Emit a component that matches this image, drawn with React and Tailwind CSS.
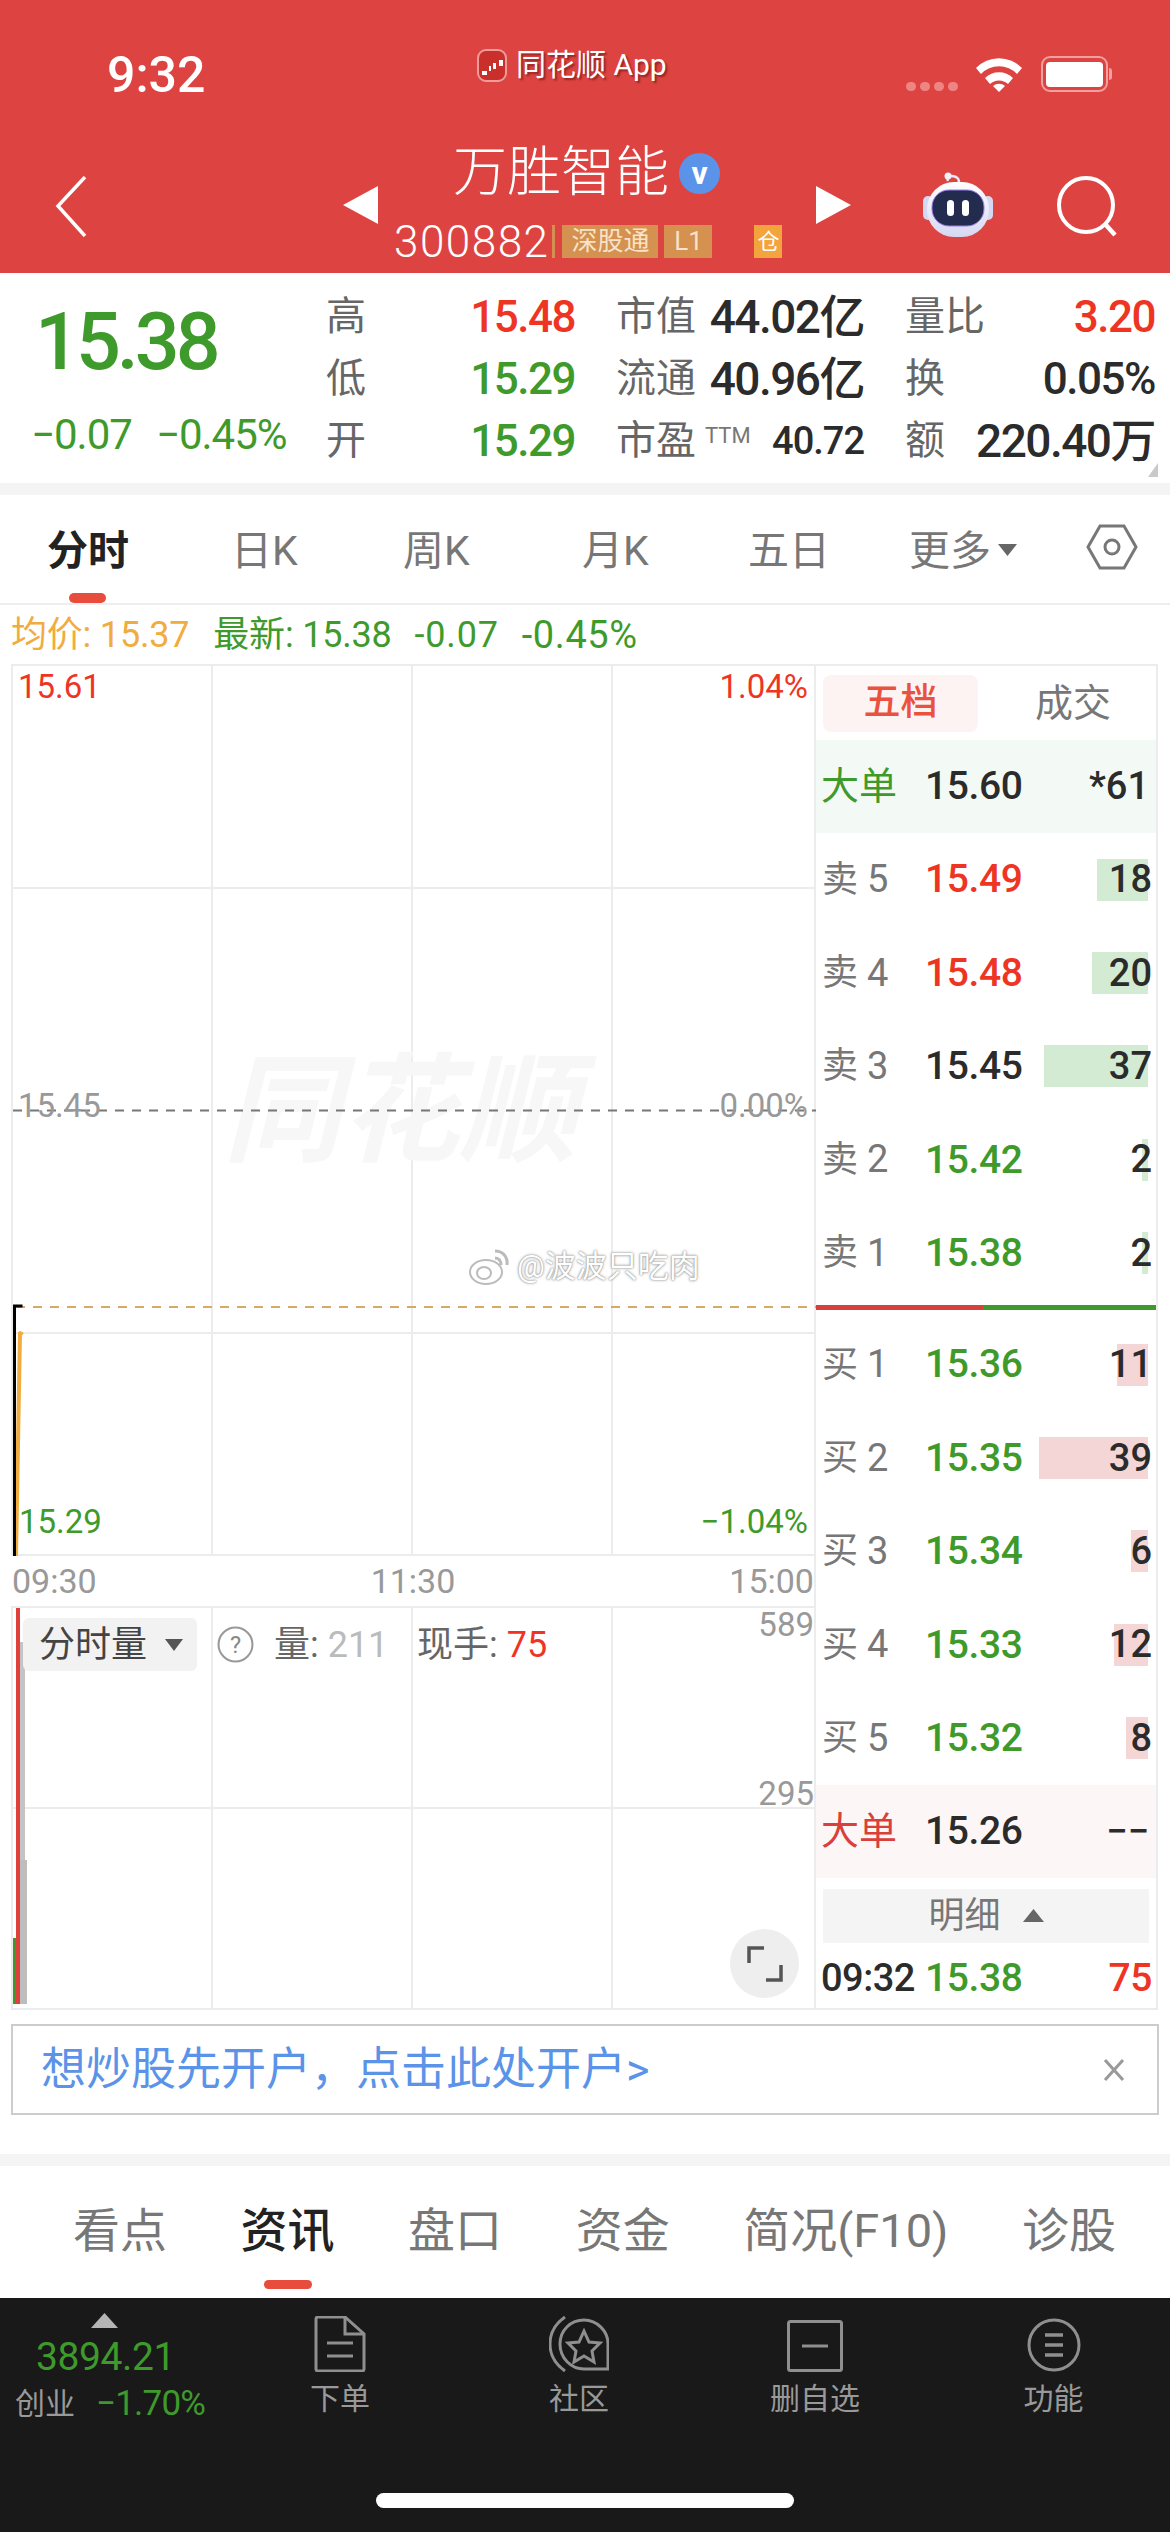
const GREEN = "text-[#3f9a2c]";
const RED = "text-[#ee3524]";
const DARK = "text-[#2b2b2b]";

const SELLS = [
  { label: "卖", n: 5, price: "15.49", color: RED, qty: "18", bar: 51 },
  { label: "卖", n: 4, price: "15.48", color: RED, qty: "20", bar: 56 },
  { label: "卖", n: 3, price: "15.45", color: DARK, qty: "37", bar: 104 },
  { label: "卖", n: 2, price: "15.42", color: GREEN, qty: "2", bar: 6 },
  { label: "卖", n: 1, price: "15.38", color: GREEN, qty: "2", bar: 6 },
];

const BUYS = [
  { label: "买", n: 1, price: "15.36", qty: "11", bar: 31 },
  { label: "买", n: 2, price: "15.35", qty: "39", bar: 109 },
  { label: "买", n: 3, price: "15.34", qty: "6", bar: 17 },
  { label: "买", n: 4, price: "15.33", qty: "12", bar: 34 },
  { label: "买", n: 5, price: "15.32", qty: "8", bar: 22 },
];

const CHART_TABS = [
  { label: "分时", left: "w-[231px]", active: true },
  { label: "日K", left: "w-[172px]" },
  { label: "周K", left: "w-[179px]" },
  { label: "月K", left: "w-[166px]" },
  { label: "五日", left: "w-[161px]" },
];

const NEWS_TABS = ["看点", "资讯", "盘口", "资金", "简况(F10)", "诊股"];

function BookRow({ row, barColor }) {
  return (
    <div className="flex h-[93.4px] items-center pl-[6px] pr-[4px]">
      <span className="flex w-[103px] items-center text-[36px] text-[#777]">
        {row.label}
        <span className="ml-[9px] text-[38px]">{row.n}</span>
      </span>
      <span className={`w-[93px] text-[39px] font-medium tracking-[-0.4px] ${row.color || GREEN}`}>{row.price}</span>
      <span className="relative flex flex-1 items-center justify-end text-[38px] font-medium text-[#2b2b2b]">
        <span
          className={`absolute right-[4px] h-[42px] ${barColor}`}
          style={{ width: row.bar }}
        />
        <span className="relative">{row.qty}</span>
      </span>
    </div>
  );
}

function BigOrderRow({ label, labelColor, bg, price, qty }) {
  return (
    <div className={`flex h-[93px] items-center pl-[5px] pr-[4px] ${bg}`}>
      <span className={`w-[104px] text-[38px] ${labelColor}`}>{label}</span>
      <span className="w-[93px] text-[39px] font-medium tracking-[-0.4px] text-[#2b2b2b]">{price}</span>
      <span className="flex-1 pr-[3px] text-right text-[38px] font-medium text-[#2b2b2b]">{qty}</span>
    </div>
  );
}

function StatCell({ label, value, color, big }) {
  return (
    <div className="flex items-center justify-between">
      <span className="text-[40px] text-[#666]">{label}</span>
      <span className={`font-medium tracking-[-1.5px] ${big ? "text-[46px]" : "text-[44px]"} ${color}`}>{value}</span>
    </div>
  );
}

function StatusBar() {
  return (
    <div className="flex h-[112px] items-start">
      <span className="ml-[107px] mt-[50px] w-[100px] text-[50px] font-medium leading-[50px] text-white">9:32</span>
      <div className="ml-[270px] mt-[48px] flex items-center gap-[9px]">
        <svg width="30" height="33" viewBox="0 0 30 33">
          <rect x="1" y="1" width="28" height="31" rx="8" fill="#c9302c" stroke="#ee9c99" strokeWidth="2" />
          <path d="M5 22h5v4H5zM12 17h2v5h-2zM16 14h3v6h-3zM22 11h4v6h-4z" fill="#fff" />
        </svg>
        <span className="text-[30px] leading-[34px] text-white [text-shadow:2px_2px_2px_rgba(90,10,10,0.55)]">同花顺 App</span>
      </div>
      <div className="ml-[239px] mt-[82px] flex gap-[4px]">
        {[0, 1, 2, 3].map((i) => (
          <span key={i} className="h-[9px] w-[10px] rounded-full bg-[#ee8583]" />
        ))}
      </div>
      <svg className="ml-[16px] mt-[55px]" width="50" height="37" viewBox="0 0 50 37">
        <path d="M2 13a32 32 0 0 1 46 0l-5 6a25 25 0 0 0-36 0z" fill="#fff" />
        <path d="M11 23a20 20 0 0 1 28 0l-5 6a13 13 0 0 0-18 0z" fill="#fff" />
        <path d="M19 31a9 9 0 0 1 12 0l-6 6z" fill="#fff" />
      </svg>
      <div className="relative ml-[17px] mt-[56px] flex h-[36px] w-[67px] items-center rounded-[9px] border-[2px] border-[#f0a09e] px-[3px]">
        <span className="h-[25px] w-[57px] rounded-[4px] bg-white" />
        <span className="absolute -right-[6px] h-[12px] w-[3px] rounded-r bg-[#f0a09e]" />
      </div>
    </div>
  );
}

function Robot() {
  return (
    <svg width="72" height="68" viewBox="0 0 72 68">
      <defs>
        <linearGradient id="shell" x1="0" y1="0" x2="0" y2="1">
          <stop offset="0" stopColor="#ffffff" />
          <stop offset="1" stopColor="#d5d8f2" />
        </linearGradient>
      </defs>
      <path d="M26 12c-2-5 3-6 8-4 2 1 3 3 3 5" fill="none" stroke="#e6e8f5" strokeWidth="2.5" />
      <circle cx="26" cy="7" r="3.5" fill="#eef0fa" />
      <rect x="1" y="27" width="10" height="24" rx="5" fill="#d5d8f2" />
      <rect x="61" y="27" width="10" height="24" rx="5" fill="#d5d8f2" />
      <rect x="5" y="13" width="62" height="55" rx="27" fill="url(#shell)" />
      <rect x="10" y="21" width="52" height="36" rx="17" fill="#232c4f" stroke="#9a7de8" strokeWidth="1" />
      <rect x="25" y="31" width="7" height="16" rx="3.5" fill="#fff" />
      <rect x="40" y="31" width="7" height="16" rx="3.5" fill="#fff" />
    </svg>
  );
}

function TitleBar() {
  return (
    <div className="flex h-[161px] items-start">
      <svg className="ml-[55px] mt-[64px]" width="32" height="61" viewBox="0 0 32 61">
        <path d="M30 1 3 30l27 30" fill="none" stroke="#fff" strokeWidth="3.5" />
      </svg>
      <svg className="ml-[256px] mt-[74px]" width="35" height="38" viewBox="0 0 35 38">
        <path d="M35 0v38L0 19z" fill="#fff" />
      </svg>
      <div className="ml-[16px] w-[404px] pt-[17px]">
        <div className="flex h-[88px] items-center pl-[59px]">
          <span className="text-[54px] font-light leading-[60px] text-white">万胜智能</span>
          <span className="ml-[10px] flex h-[41px] w-[41px] items-center justify-center rounded-full bg-[#5b93e8] text-[32px] font-bold leading-none text-white">v</span>
        </div>
        <div className="mt-[8px] flex h-[33px] items-center">
          <span className="text-[44px] font-light leading-none tracking-[1.5px] text-white">300882</span>
          <span className="ml-[3px] h-[33px] w-[3px] bg-[#d49050]" />
          <span className="ml-[7px] flex h-[33px] w-[96px] items-center justify-center bg-[#d4914f] text-[26px] text-[#f8e2c9]">深股通</span>
          <span className="ml-[6px] flex h-[33px] w-[48px] items-center justify-center bg-[#d4914f] text-[26px] text-[#f8e2c9]">L1</span>
          <span className="ml-[42px] flex h-[33px] w-[28px] items-center justify-center bg-[#f4a43c] text-[22px] text-white">仓</span>
        </div>
      </div>
      <svg className="ml-[18px] mt-[74px]" width="35" height="38" viewBox="0 0 35 38">
        <path d="M0 0v38L35 19z" fill="#fff" />
      </svg>
      <div className="ml-[71px] mt-[57px]">
        <Robot />
      </div>
      <svg className="ml-[63px] mt-[64px]" width="62" height="62" viewBox="0 0 62 62">
        <circle cx="29" cy="29" r="27" fill="none" stroke="#fff" strokeWidth="4" />
        <path d="M49 49l9 10" stroke="#fff" strokeWidth="4.5" />
      </svg>
    </div>
  );
}

function Stats() {
  return (
    <div className="relative flex h-[210px] bg-white">
      <div className="w-[326px] shrink-0">
        <div className="ml-[35px] mt-[26px] text-[79px] font-medium leading-[86px] tracking-[-4px] text-[#3f9a2c]">15.38</div>
        <div className="ml-[31px] mt-[28px] flex gap-[24px] text-[42px] leading-[44px] tracking-[-1px] text-[#3f9a2c]">
          <span>−0.07</span>
          <span>−0.45%</span>
        </div>
      </div>
      <div className="mt-[13px] grid h-[186px] w-[829px] grid-cols-[249px_248px_250px] grid-rows-3 gap-x-[41px]">
        <StatCell label="高" value="15.48" color={RED} />
        <StatCell label="市值" value="44.02亿" color={DARK} big />
        <StatCell label="量比" value="3.20" color={RED} />
        <StatCell label="低" value="15.29" color={GREEN} />
        <StatCell label="流通" value="40.96亿" color={DARK} big />
        <StatCell label="换" value="0.05%" color={DARK} />
        <StatCell label="开" value="15.29" color={GREEN} />
        <div className="flex items-center justify-between">
          <span className="flex items-start">
            <span className="text-[40px] text-[#666]">市盈</span>
            <span className="ml-[9px] mt-[8px] text-[22px] text-[#777]">TTM</span>
          </span>
          <span className="text-[38px] font-medium tracking-[-1px] text-[#2b2b2b]">40.72</span>
        </div>
        <StatCell label="额" value="220.40万" color={DARK} big />
      </div>
      <svg className="absolute bottom-[6px] right-[12px]" width="10" height="14" viewBox="0 0 10 14">
        <path d="M10 0v14H0z" fill="#c9c9c9" />
      </svg>
    </div>
  );
}

function ChartTabs() {
  return (
    <div className="flex h-[110px] items-start border-b-[2px] border-[#eeeeee] bg-white pt-[32px]">
      {CHART_TABS.map((t) => (
        <div key={t.label} className={`relative shrink-0 ${t.left} ${t.active ? "pl-[47px]" : ""}`}>
          <span className={`text-[41px] leading-[48px] ${t.active ? "font-semibold text-[#222]" : "text-[#777]"}`}>{t.label}</span>
          {t.active && <span className="absolute left-[69px] top-[66px] h-[10px] w-[37px] rounded-full bg-[#e84c3d]" />}
        </div>
      ))}
      <span className="w-[89px] shrink-0 text-[41px] leading-[48px] text-[#777]">更多</span>
      <svg className="mt-[17px] shrink-0" width="19" height="12" viewBox="0 0 19 12">
        <path d="M0 0h19l-9.500 12z" fill="#666" />
      </svg>
      <svg className="ml-[69px] -mt-[3px] shrink-0" width="52" height="46" viewBox="0 0 52 46">
        <path d="M14 2h24l12 21-12 21H14L2 23z" fill="none" stroke="#777" strokeWidth="3" />
        <circle cx="26" cy="23" r="7" fill="none" stroke="#777" strokeWidth="3" />
      </svg>
    </div>
  );
}

function InfoLine() {
  return (
    <div className="flex h-[59px] items-center bg-white pl-[11px] pt-[1px] text-[36px] tracking-[-0.2px]">
      <span className="text-[#f0ac3e]">均价: 15.37</span>
      <span className="ml-[24px] text-[#3f9a2c]">最新: 15.38</span>
      <span className="ml-[23px] tracking-[0.8px] text-[#3f9a2c]">-0.07</span>
      <span className="ml-[23px] text-[38px] tracking-[0.6px] text-[#3f9a2c]">-0.45%</span>
    </div>
  );
}

function GridCells({ rows, skipRow }) {
  const cells = [];
  for (let i = 0; i < rows * 4; i++) {
    const row = Math.floor(i / 4);
    cells.push(
      <div
        key={i}
        className={`${i % 4 === 3 ? "" : "border-r-[2px]"} ${row === skipRow ? "" : "border-b-[2px]"} border-[#ececec]`}
      />
    );
  }
  return cells;
}

function WeiboMark() {
  return (
    <div className="absolute left-[456px] top-[578px] flex items-center gap-[6px] text-[31px] text-white [text-shadow:0_0_3px_#888,0_0_1px_#888]">
      <svg width="42" height="38" viewBox="0 0 42 38">
        <ellipse cx="17" cy="24" rx="16" ry="12" fill="#fff" stroke="#bbb" strokeWidth="2" />
        <ellipse cx="15" cy="25" rx="7" ry="6" fill="none" stroke="#bbb" strokeWidth="2" />
        <path d="M26 3c8 0 13 6 12 14M26 10c4 0 6 3 6 7" fill="none" stroke="#bbb" strokeWidth="3" />
      </svg>
      <span>@波波只吃肉</span>
    </div>
  );
}

function MainChart() {
  return (
    <div className="relative grid h-[892px] grid-cols-[200px_200px_200px_203px] grid-rows-4 border-l-[2px] border-t-[2px] border-[#ececec] bg-white">
      <GridCells rows={4} skipRow={1} />
      <span className="absolute left-[210px] top-[381px] select-none text-[118px] font-bold italic leading-[130px] text-[#f7f7f7]">同花顺</span>
      <svg className="absolute left-0 top-0" width="803" height="892" viewBox="0 0 803 892">
        <path d="M0 444.500H803" stroke="#777" strokeWidth="2" strokeDasharray="9 8" />
        <path d="M3 641H803" stroke="#d8a868" strokeWidth="2" strokeDasharray="9 8" />
        <path d="M3 890 7 666" stroke="#f0ac3e" strokeWidth="4" fill="none" />
        <path d="M6 666l4 2" stroke="#f0ac3e" strokeWidth="3" />
        <path d="M1.500 890V640h8" stroke="#000" strokeWidth="3" fill="none" />
      </svg>
      <span className="absolute left-[5px] top-[1px] text-[33px] leading-[40px] text-[#ee3524]">15.61</span>
      <span className="absolute right-[6px] top-[1px] text-[33px] leading-[40px] text-[#ee3524]">1.04%</span>
      <span className="absolute left-[5px] top-[420px] text-[33px] leading-[40px] text-[#999]">15.45</span>
      <span className="absolute right-[6px] top-[420px] text-[33px] leading-[40px] text-[#999]">0.00%</span>
      <span className="absolute bottom-[14px] left-[6px] text-[33px] leading-[40px] text-[#3f9a2c]">15.29</span>
      <span className="absolute bottom-[14px] right-[6px] text-[33px] leading-[40px] text-[#3f9a2c]">−1.04%</span>
      <WeiboMark />
    </div>
  );
}

function VolumeChart() {
  return (
    <div className="relative grid h-[404px] grid-cols-[200px_200px_200px_203px] grid-rows-2 border-l-[2px] border-t-[2px] border-[#ececec] bg-white">
      <GridCells rows={2} />
      <svg className="absolute left-0 top-0" width="16" height="398" viewBox="0 0 16 398">
        <rect x="6" y="34" width="6" height="362" fill="#c4c4c4" />
        <rect x="6" y="252" width="8" height="144" fill="#bdbdbd" />
        <rect x="0" y="330" width="4" height="66" fill="#3f9a2c" />
        <rect x="3" y="0" width="4" height="396" fill="#e0403c" />
      </svg>
      <div className="absolute left-[10px] top-[10px] flex h-[53px] w-[174px] items-center rounded-[6px] bg-[#f2f2f2] pl-[16px] text-[36px] text-[#444]">
        分时量
        <svg className="ml-[18px]" width="18" height="12" viewBox="0 0 18 12">
          <path d="M0 0h18l-9 12z" fill="#555" />
        </svg>
      </div>
      <svg className="absolute left-[204px] top-[18px]" width="37" height="37" viewBox="0 0 36 36">
        <circle cx="18" cy="18" r="16.500" fill="none" stroke="#999" strokeWidth="2" />
        <text x="18" y="26" textAnchor="middle" fontSize="23" fill="#888" fontFamily="Roboto">?</text>
      </svg>
      <span className="absolute left-[261px] top-[15px] text-[36px] leading-[44px] text-[#666]">
        量: <span className="text-[#bbb]">211</span>
      </span>
      <span className="absolute left-[404px] top-[15px] text-[36px] leading-[44px] text-[#666]">
        现手: <span className="text-[#ee3524]">75</span>
      </span>
      <span className="absolute right-[0px] top-[-3px] text-[33px] leading-[40px] text-[#999]">589</span>
      <span className="absolute right-[0px] top-[166px] text-[33px] leading-[40px] text-[#999]">295</span>
      <div className="absolute left-[717px] top-[321px] flex h-[69px] w-[69px] items-center justify-center rounded-full bg-[#eeeeee]">
        <svg width="36" height="36" viewBox="0 0 36 36">
          <path d="M2 17V2h15M34 19v15H19" fill="none" stroke="#555" strokeWidth="3.500" />
        </svg>
      </div>
    </div>
  );
}

function OrderBook() {
  return (
    <div className="flex h-[1346px] w-[344px] flex-col border-x-[2px] border-y-[2px] border-[#ececec] bg-white">
      <div className="flex h-[74px] shrink-0 items-center pl-[7px]">
        <span className="flex h-[57px] w-[155px] items-center justify-center rounded-[8px] bg-[#fdf3f2] text-[37px] font-medium text-[#e8523f]">五档</span>
        <span className="ml-[20px] w-[150px] text-center text-[38px] text-[#777]">成交</span>
      </div>
      <BigOrderRow label="大单" labelColor="text-[#3f9a2c]" bg="bg-[#f3f9f5]" price="15.60" qty="*61" />
      {SELLS.map((r) => (
        <BookRow key={r.n} row={r} barColor="bg-[#d2ebd2]" />
      ))}
      <div className="mt-[5px] flex h-[5px] shrink-0">
        <span className="w-[167px] bg-[#d8403b]" />
        <span className="flex-1 bg-[#3f9a2c]" />
      </div>
      <div className="h-[8px] shrink-0" />
      {BUYS.map((r) => (
        <BookRow key={r.n} row={r} barColor="bg-[#f4d6d6]" />
      ))}
      <BigOrderRow label="大单" labelColor="text-[#d8403b]" bg="bg-[#fdf6f6]" price="15.26" qty="−−" />
      <div className="mx-[7px] mt-[11px] flex h-[54px] shrink-0 items-center justify-center gap-[22px] bg-[#f4f4f4] text-[36px] text-[#777]">
        明细
        <svg width="21" height="13" viewBox="0 0 21 13">
          <path d="M0 13 10.500 0 21 13z" fill="#666" />
        </svg>
      </div>
      <div className="flex flex-1 items-center pl-[5px] pr-[4px] pt-[6px] text-[39px] font-medium tracking-[-0.4px]">
        <span className="w-[104px] text-[38px] tracking-[-0.5px] text-[#2b2b2b]">09:32</span>
        <span className={`w-[93px] ${GREEN}`}>15.38</span>
        <span className={`flex-1 text-right ${RED}`}>75</span>
      </div>
    </div>
  );
}

function NavIcon({ children }) {
  return <div className="flex h-[58px] items-end justify-center">{children}</div>;
}

function BottomBar() {
  return (
    <div className="flex h-[234px] flex-col bg-[#191919]">
      <div className="flex h-[195px] items-start">
        <div className="w-[235px] shrink-0">
          <svg className="ml-[91px] mt-[15px]" width="27" height="15" viewBox="0 0 27 15">
            <path d="M0 15 13.500 0 27 15z" fill="#b5b5b5" />
          </svg>
          <div className="ml-[36px] mt-[7px] text-[39px] leading-[44px] tracking-[-0.4px] text-[#3f9a2c]">3894.21</div>
          <div className="ml-[15px] mt-[4px] flex items-center gap-[21px]">
            <span className="text-[30px] leading-[42px] text-[#999]">创业</span>
            <span className="text-[35px] leading-[42px] tracking-[-0.8px] text-[#3f9a2c]">−1.70%</span>
          </div>
        </div>
        <div className="mt-[16px] w-[210px] shrink-0 text-center">
          <NavIcon>
            <svg width="52" height="56" viewBox="0 0 52 56">
              <path d="M2 3a2 2 0 0 1 2-2h27l19 17v35a2 2 0 0 1-2 2H4a2 2 0 0 1-2-2z" fill="none" stroke="#8f8f8f" strokeWidth="3" />
              <path d="M31 1v17h19M13 27h26M13 40h26" fill="none" stroke="#8f8f8f" strokeWidth="3" />
            </svg>
          </NavIcon>
          <div className="mt-[9px] text-[30px] leading-[36px] text-[#999]">下单</div>
        </div>
        <div className="ml-[16px] mt-[16px] w-[236px] shrink-0 text-center">
          <NavIcon>
            <svg width="60" height="56" viewBox="0 0 60 56">
              <path d="M16 1C6 8 1 17 1 28s5 20 15 27" fill="none" stroke="#8f8f8f" strokeWidth="3" />
              <path d="M35 4c13 0 24 11 24 24v25H35C22 53 11 42 11 28S22 4 35 4z" fill="none" stroke="#8f8f8f" strokeWidth="3" />
              <path d="M35 15l5 11 11 1-8 8 2 11-10-6-10 6 2-11-8-8 11-1z" fill="none" stroke="#8f8f8f" strokeWidth="3" />
            </svg>
          </NavIcon>
          <div className="mt-[9px] text-[30px] leading-[36px] text-[#999]">社区</div>
        </div>
        <div className="mt-[16px] w-[236px] shrink-0 text-center">
          <NavIcon>
            <svg width="56" height="52" viewBox="0 0 56 52">
              <rect x="1.500" y="1.500" width="53" height="49" rx="2" fill="none" stroke="#8f8f8f" strokeWidth="3" />
              <path d="M15 26h26" stroke="#8f8f8f" strokeWidth="3" />
            </svg>
          </NavIcon>
          <div className="mt-[9px] text-[30px] leading-[36px] text-[#999]">删自选</div>
        </div>
        <div className="mt-[16px] w-[237px] shrink-0 pl-[4px] text-center">
          <NavIcon>
            <svg width="54" height="54" viewBox="0 0 54 54">
              <circle cx="27" cy="27" r="25" fill="none" stroke="#8f8f8f" strokeWidth="3" />
              <path d="M18 17h18M18 27h18M18 37h18" stroke="#8f8f8f" strokeWidth="3.500" />
            </svg>
          </NavIcon>
          <div className="mt-[9px] text-[30px] leading-[36px] text-[#999]">功能</div>
        </div>
      </div>
      <div className="mx-auto h-[15px] w-[418px] rounded-full bg-white" />
    </div>
  );
}

export default function App() {
  return (
    <div className="h-[2532px] w-[1170px] overflow-hidden bg-white font-['Roboto','Noto_Sans_CJK_SC',sans-serif]">
      <div className="h-[273px] bg-[#dd4441]">
        <StatusBar />
        <TitleBar />
      </div>
      <Stats />
      <div className="h-[12px] bg-[#f4f4f4]" />
      <ChartTabs />
      <InfoLine />
      <div className="flex pl-[11px]">
        <div className="w-[803px] shrink-0">
          <MainChart />
          <div className="relative flex h-[50px] items-center justify-between pl-[1px] text-[34px] text-[#999]">
            <span>09:30</span>
            <span>11:30</span>
            <span>15:00</span>
          </div>
          <VolumeChart />
        </div>
        <OrderBook />
      </div>
      <div className="mx-[11px] mt-[14px] flex h-[91px] w-[1148px] items-center justify-between border-[2px] border-[#cccccc] pl-[28px] pr-[32px]">
        <span className="text-[45px] text-[#5b93e8]">想炒股先开户，点击此处开户&gt;</span>
        <svg width="22" height="24" viewBox="0 0 22 24">
          <path d="M2 2l18 20M20 2 2 22" stroke="#999" strokeWidth="3" />
        </svg>
      </div>
      <div className="mt-[39px] h-[12px] bg-[#f4f4f4]" />
      <div className="relative flex h-[132px] items-center justify-between bg-white pb-[2px] pl-[73px] pr-[54px] text-[47px] text-[#777]">
        {NEWS_TABS.map((t) => (
          <span key={t} className={t === "资讯" ? "font-medium text-[#222]" : ""}>{t}</span>
        ))}
        <span className="absolute left-[264px] top-[114px] h-[9px] w-[48px] rounded-full bg-[#e84c3d]" />
      </div>
      <BottomBar />
    </div>
  );
}
